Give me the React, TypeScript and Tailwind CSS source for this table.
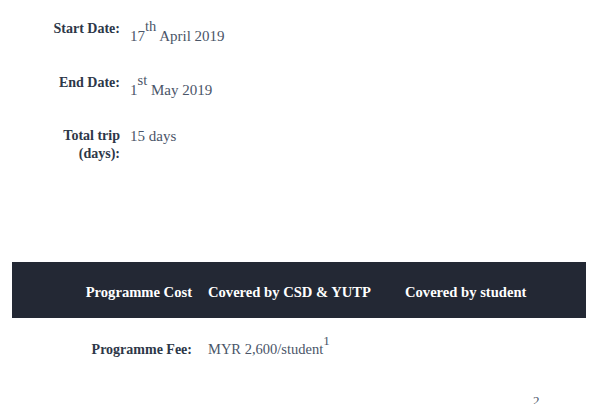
import React from "react"

const serif = "font-['Liberation_Serif','Times_New_Roman',serif]"

function DateRow({ label, children, shift }: { label: string; children: React.ReactNode; shift?: boolean }) {
  return (
    <div className="flex items-start">
      <div className="w-[120px] shrink-0 pl-[50px] text-right text-[14px] font-bold leading-[18px] text-[#2d3748]">
        {label}
      </div>
      <div className={`pl-[10px] text-[15px] leading-[18px] text-[#4a5568] ${shift ? "pt-[7px]" : ""}`}>
        {children}
      </div>
    </div>
  )
}

function Sup({ children }: { children: React.ReactNode }) {
  return <sup className="relative -top-[10px] align-baseline text-[14.5px]">{children}</sup>
}

export default function App() {
  return (
    <div className={`w-[607px] h-[404px] overflow-hidden bg-white ${serif}`}>
      {/* Trip dates */}
      <div className="flex flex-col gap-[29px] pt-[20px]">
        <DateRow label="Start Date:" shift>
          17<Sup>th</Sup> April 2019
        </DateRow>
        <DateRow label="End Date:" shift>
          1<Sup>st</Sup> May 2019
        </DateRow>
        <div className="-mt-px">
          <DateRow label="Total trip (days):">15 days</DateRow>
        </div>
      </div>

      {/* Cost table */}
      <div className="ml-[12px] mt-[99px] w-[574px]">
        <div className="grid h-[56px] grid-cols-[180px_181px_1fr] items-center gap-x-4 bg-[#232834] pt-[3px] text-[14.6px] font-bold leading-[18px] text-white">
          <div className="text-right">Programme Cost</div>
          <div>Covered by CSD &amp; YUTP</div>
          <div>Covered by student</div>
        </div>

        <div className="mt-[22px] grid grid-cols-[180px_181px_1fr] items-baseline gap-x-4 leading-[18px]">
          <div className="text-right text-[14px] font-bold text-[#2d3748]">Programme Fee:</div>
          <div className="whitespace-nowrap text-[14.5px] text-[#4a5568]">
            MYR 2,600/student
            <sup className="relative -top-[9px] align-baseline text-[13px]">1</sup>
          </div>
          <div />
        </div>

        <div className="mt-[43px] grid grid-cols-[180px_181px_1fr] items-baseline gap-x-4 leading-[18px]">
          <div className="text-right text-[14px] font-bold text-[#2d3748]">Accommodation:</div>
          <div />
          <div className="whitespace-nowrap text-[14.5px] text-[#4a5568]">
            Approx. MYR 12,000
            <sup className="relative -top-[11px] align-baseline text-[13px]">2</sup>
          </div>
        </div>
      </div>
    </div>
  )
}
